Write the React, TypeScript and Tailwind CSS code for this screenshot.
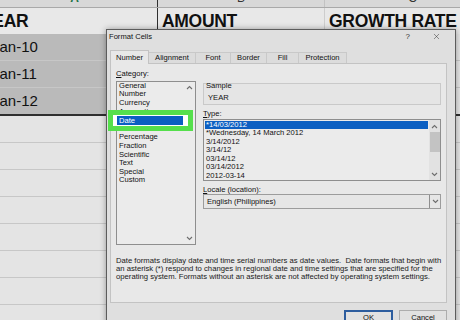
import { X } from "lucide-react";

const CATEGORIES = ["General", "Number", "Currency", "Accounting", "Date", "Time", "Percentage", "Fraction", "Scientific", "Text", "Special", "Custom"];
const TYPES = ["*14/03/2012", "*Wednesday, 14 March 2012", "3/14/2012", "3/14/12", "03/14/12", "03/14/2012", "2012-03-14"];
const TABS = [
  { label: "Number", w: "w-[39px]" },
  { label: "Alignment", w: "w-[48px]" },
  { label: "Font", w: "w-[36px]" },
  { label: "Border", w: "w-[37px]" },
  { label: "Fill", w: "w-[33px]" },
  { label: "Protection", w: "w-[49px]" },
];

function Chevron({ up }: { up?: boolean }) {
  return (
    <svg width="7" height="5" viewBox="0 0 7 5" className="block">
      <path d={up ? "M1 4 L3.5 1.5 L6 4" : "M1 1 L3.5 3.5 L6 1"} fill="none" stroke="#6e6e6e" strokeWidth="1.1" />
    </svg>
  );
}

function SheetRow({ a, sel, last }: { a?: string; sel?: boolean; last?: boolean }) {
  return (
    <div className={`flex h-[27px] ${last ? "h-[28px] border-b-2 border-[#2f2f2f]" : "border-b border-[#c7c7c7]"}`}>
      <div className={`flex w-[178px] items-center pl-[12px] text-[15px] ${sel ? "bg-[#bababa]" : ""}`}>{a}</div>
      <div className="w-[167px]" />
      <div className="w-[175px]" />
    </div>
  );
}

export default function App() {
  return (
    <div className="relative h-[320px] w-[460px] overflow-hidden bg-[#e4e4e4] font-['Liberation_Sans',Arial,sans-serif] text-[#111]">
      {/* spreadsheet behind */}
      <div className="-ml-[20px] flex w-[520px] flex-col">
        <div className="flex h-[8px] border-b border-[#a9a9a9] bg-[#d8d8d8] text-[12px] leading-[12px]">
          <div className="flex w-[178px] justify-center overflow-hidden border-r border-[#2f2f2f] pl-[12px]">
            <span className="-mt-[8px] font-bold text-[#217346]">A</span>
          </div>
          <div className="flex w-[167px] justify-center overflow-hidden border-r border-[#c2c2c2]">
            <span className="-mt-[8px] text-[#333]">B</span>
          </div>
          <div className="flex w-[175px] justify-center overflow-hidden">
            <span className="-mt-[8px] text-[#333]">C</span>
          </div>
        </div>
        <div className="flex h-[26px] bg-[#e8e8e8] text-[17.5px] font-bold tracking-[-0.3px]">
          <div className="flex w-[178px] items-center border-r border-[#2f2f2f] pl-[1px]">YEAR</div>
          <div className="flex w-[167px] items-center border-r border-[#cdcdcd] pl-[4px]">AMOUNT</div>
          <div className="flex w-[175px] items-center pl-[4px]">GROWTH RATE</div>
        </div>
        <SheetRow a="Jan-10" sel />
        <SheetRow a="Jan-11" sel />
        <SheetRow a="Jan-12" sel last />
        {Array.from({ length: 8 }).map((_, i) => (
          <SheetRow key={i} />
        ))}
      </div>

      {/* Format Cells dialog */}
      <div className="absolute left-[106px] top-[29px] flex h-[300px] w-[350px] flex-col border border-[#5c5c5c] bg-[#dfdfdf] text-[7.6px] leading-[9px] shadow-[0_0_6px_rgba(0,0,0,0.35)]">
        <div className="flex h-[18px] items-start justify-between pl-[2px] pr-[14px] pt-[2px]">
          <span>Format Cells</span>
          <div className="flex items-start gap-[22px]">
            <span className="text-[8px] text-[#333]">?</span>
            <X size={9} strokeWidth={1.2} className="text-[#222]" />
          </div>
        </div>
        <div className="flex h-[15px] items-end pl-[3px]">
          {TABS.map((t, i) => (
            <div
              key={t.label}
              className={`${t.w} flex items-center justify-center border border-b-0 ${i > 0 ? "-ml-px" : ""} ${
                i === 0 ? "relative z-10 -mb-px h-[14px] border-[#c3c3c3] bg-[#e8e8e8]" : "h-[11px] border-[#c9c9c9] bg-[#dcdcdc]"
              }`}
            >
              {t.label}
            </div>
          ))}
        </div>
        <div className="ml-[3px] flex h-[241px] w-[337px] flex-col border border-[#c3c3c3] bg-[#e8e8e8] px-[5px]">
          <div className="flex gap-[7px]">
            <div className="flex w-[80px] flex-col pt-[5px]">
              <span>
                <span className="underline">C</span>ategory:
              </span>
              <div className="mt-[3px] flex h-[164px] border border-[#8e8e8e] bg-[#ebebeb]">
                <div className="flex flex-1 flex-col pl-[2px] leading-[8.6px]">
                  {CATEGORIES.map((c) => (
                    <span key={c}>{c}</span>
                  ))}
                </div>
                <div className="flex w-[11px] flex-col items-center justify-between py-[3px]">
                  <Chevron up />
                  <Chevron />
                </div>
              </div>
            </div>
            <div className="flex w-[238px] flex-col pt-[19px]">
              <div className="h-[22px] border border-[#c9c9c9] bg-[#e5e5e5]">
                <div className="-mt-[3px] pl-[2px]">Sample</div>
                <div className="mt-[3px] pl-[4px]">YEAR</div>
              </div>
              <span className="mt-[4px]">
                <span className="underline">T</span>ype:
              </span>
              <div className="mt-[1px] flex h-[62px] border border-[#8e8e8e] bg-[#ebebeb]">
                <div className="flex flex-1 flex-col px-[1px] pt-[1px] leading-[8.5px]">
                  {TYPES.map((t, i) => (
                    <span key={t} className={i === 0 ? "bg-[#0b5fc2] pl-[1px] text-white" : "pl-[1px]"}>
                      {t}
                    </span>
                  ))}
                </div>
                <div className="flex w-[11px] flex-col items-center bg-[#e2e2e2] pt-[4px]">
                  <Chevron up />
                  <div className="mt-[3px] h-[20px] w-[10px] bg-[#c3c3c3]" />
                  <div className="flex-1" />
                  <div className="pb-[3px]">
                    <Chevron />
                  </div>
                </div>
              </div>
              <span className="mt-[4px]">
                <span className="underline">L</span>ocale (location):
              </span>
              <div className="flex h-[15px] items-center border border-[#9c9c9c] bg-[#e6e6e6]">
                <span className="flex-1 pl-[3px]">English (Philippines)</span>
                <div className="flex h-full w-[11px] items-center justify-center border-l border-[#8e8e8e]">
                  <Chevron />
                </div>
              </div>
            </div>
          </div>
          <p className="mt-[12px] whitespace-nowrap text-[7.7px] leading-[8.3px] text-[#1a1a1a]">
            Date formats display date and time serial numbers as date values.&nbsp; Date formats that begin with
            <br />
            an asterisk (*) respond to changes in regional date and time settings that are specified for the
            <br />
            operating system. Formats without an asterisk are not affected by operating system settings.
          </p>
        </div>
        <div className="mt-[7px] flex justify-end gap-[6px] pr-[8px]">
          <div className="flex h-[18px] w-[49px] items-start justify-center border-2 border-[#2d5d9e] bg-[#e1e1e1] pt-[1px]">OK</div>
          <div className="flex h-[18px] w-[48px] items-start justify-center border border-[#adadad] bg-[#e1e1e1] pt-[2px]">Cancel</div>
        </div>
      </div>

      {/* green highlight annotation */}
      <div className="absolute left-[108px] top-[110px] h-[21px] w-[85px] border-[5px] border-[#55df4c] bg-white pl-[4px] pt-[1px] font-['Liberation_Sans',Arial,sans-serif] text-[7.6px] leading-[9px]">
        <div className="h-[9px] w-[66px] bg-[#0b5fc2] pl-[2px] text-white">Date</div>
      </div>
    </div>
  );
}
